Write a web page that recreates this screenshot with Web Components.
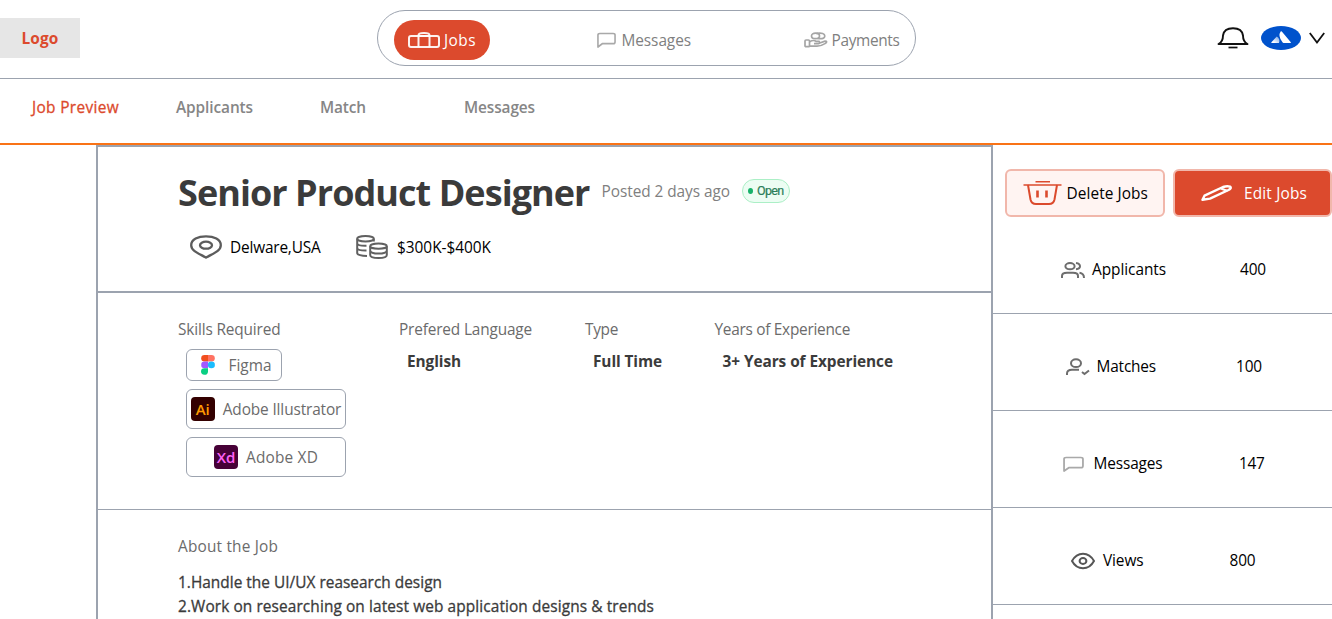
<!DOCTYPE html>
<html lang="en">
<head>
<meta charset="utf-8">
<title>Job Preview</title>
<style>
html,body{margin:0;height:100%;overflow:hidden;background:#fff;font:15.4px/24px "Open Sans","Noto Sans",sans-serif;color:#000}
</style>
</head>
<body>
<job-app></job-app>
<script>
const define = (name, html, setup) => {
  const t = document.createElement('template');
  t.innerHTML = html;
  customElements.define(name, class extends HTMLElement {
    connectedCallback() {
      if (this.shadowRoot) return;
      this.attachShadow({mode: 'open'}).append(t.content.cloneNode(true));
      if (setup) setup(this, this.shadowRoot);
    }
  });
};

/* A one-line label whose tracking is adjusted to fill the width in `w`. */
define('fit-text', `<style>:host{display:block;flex:none;white-space:nowrap}span{display:inline-block;transform:translateY(var(--dy,1px))}</style><span><slot></slot></span>`,
(host, root) => {
  const w = +host.getAttribute('w'), s = root.querySelector('span');
  host.style.width = w + 'px';
  s.style.letterSpacing = '0px';
  s.style.letterSpacing = ((w - s.getBoundingClientRect().width) / host.textContent.length).toFixed(3) + 'px';
});

const icons = {
  jobs: ['0 0 32 16', '<g stroke="#fff" stroke-opacity=".92" stroke-width="2"><rect x="1" y="4" width="30" height="11" rx="2"/><path d="M10.500 15V3.200Q10.500 1 16 1t5.500 2.200V15M10.500 4h11"/></g>'],
  msg: ['0 0 20 16', '<path d="M1 15V3Q1 1.500 3 1.500H17Q19 1.500 19 3V10Q19 11.700 17 11.700H5.500Z" stroke="#a9a9a9" stroke-width="1.700" stroke-linejoin="round"/>'],
  pay: ['0 0 24 16', '<g stroke="#a5a5a5" stroke-width="1.700"><ellipse cx="11.500" cy="3.900" rx="4" ry="2.700"/><path d="M12.500 1.400Q20.800 .300 20.800 3.900T13.500 6.400"/><rect x="1" y="8" width="4.500" height="6.700" rx="1"/><path d="M5.500 9.700Q10 7.500 12 9.400H15Q16.500 11.200 14.500 11.700H10M15 11.200L21 9.200Q24 9.200 21.500 11.400Q17 14.200 13 14.200H5.500"/></g>'],
  bell: ['0 0 32 24', '<path d="M1.500 18Q6 15.800 6 9.500Q7 2.200 16 2.200T26 9.500Q26 15.800 30.500 18Z" stroke="#111" stroke-width="1.900" stroke-linejoin="round"/><path d="M11.500 21.500H20.500" stroke="#111" stroke-width="1.700"/>'],
  avatar: ['0 0 40 24', '<defs><linearGradient id="g" x1="1" y1="0" x2="0" y2="1"><stop offset="0" stop-color="#6da0e8"/><stop offset=".8" stop-color="#fff"/></linearGradient></defs><ellipse cx="20" cy="12" rx="20" ry="12" fill="#0052cc"/><path d="M15.800 10.500Q19.500 13 18 17H10.600Q10 17 10.400 16.300Z" fill="url(#g)"/><path d="M19.600 5.500Q20.200 4.900 20.800 5.500L29.800 16.300Q30.200 17 29.500 17H22.500Q22 17 21.500 16.300Q16.500 10 19.600 5.500Z" fill="#fff"/>'],
  chevron: ['0 0 16 12', '<path d="M.8 1L8 10.500 15.200 1" stroke="#111" stroke-width="1.800"/>'],
  pin: ['0 0 32 24', '<g stroke="#5c5c5c" stroke-width="2.300"><path d="M16 22.600C9 18.500 1.200 16 1.200 10.200C1.200 4.500 8 1.300 16 1.300S30.800 4.500 30.800 10.200C30.800 16 23 18.500 16 22.600Z"/><ellipse cx="16" cy="10.200" rx="6" ry="3.500"/></g>'],
  coins: ['0 0 32 24', '<g stroke="#606060" stroke-width="2"><ellipse cx="9.500" cy="3.800" rx="8.300" ry="2.700"/><path d="M1.200 3.800V18Q1.200 20.700 11 20.900M17.800 3.800V6.500M1.200 8.500Q2 11 10.500 10.700M1.200 13.200Q2 15.700 10.500 15.500"/><ellipse cx="22.500" cy="11.200" rx="8.300" ry="2.600"/><path d="M14.200 11.200V20Q14.200 23 22.500 23T30.800 20V11.200M14.200 15.700Q15 18.600 22.500 18.600T30.800 15.700"/></g>'],
  trash: ['0 0 39 24', '<g stroke="#db4a2d"><path d="M.5 4H38.500M12.500 .8H27" stroke-width="1.500"/><path d="M5 4L7.500 18.500Q8.500 23 13 23H26Q30.500 23 31.500 18.500L34 4" stroke-width="2"/><path d="M14.500 9.500V16.500M23.500 9.500V16.500" stroke-width="2.600"/></g>'],
  pen: ['0 0 32 16', '<g stroke="#fff" stroke-width="2.400" stroke-linejoin="round"><path d="M1.500 14.800L3.500 10.700 22 2Q26 .8 29 1.600Q31 3 27.500 5L9 13.600Z"/><path d="M20 3.500L26.500 6"/></g>'],
  people: ['0 0 24 16', '<g stroke="#6d6d6d" stroke-width="2"><ellipse cx="9" cy="4.200" rx="4.600" ry="3.100"/><path d="M1 16V14Q1 10.800 6 10.800H12Q17 10.800 17 14V16M15 1.100Q19 1.700 19 4.300T15 7.300M18.500 10.800Q23 11.400 23 16"/></g>'],
  match: ['0 0 24 18', '<g stroke="#6d6d6d" stroke-width="2"><ellipse cx="10" cy="5.200" rx="5" ry="3.900"/><path d="M1 17V15.500Q1 11.700 6 11.700H13M16 14L18.500 16 23 12.500"/></g>'],
  eye: ['0 0 24 18', '<g stroke="#565656" stroke-width="2"><path d="M1 9Q5 1.700 12 1.700T23 9Q19 16.300 12 16.300T1 9Z"/><ellipse cx="12" cy="9" rx="3.400" ry="3"/></g>'],
  figma: ['0 0 14 20', '<path d="M3.500 0H7V6.600H3.500A3.300 3.300 0 0 1 3.500 0Z" fill="#f24e1e"/><path d="M7 0H10.500A3.300 3.300 0 0 1 10.500 6.600H7Z" fill="#ff7262"/><path d="M3.500 6.600H7V13.200H3.500A3.300 3.300 0 0 1 3.500 6.600Z" fill="#a259ff"/><ellipse cx="10.400" cy="9.900" rx="3.500" ry="3.300" fill="#1abcfe"/><path d="M3.500 13.200H7V16.700A3.500 3.300 0 1 1 3.500 13.200Z" fill="#0acf83"/>']
};
define('ui-icon', `<style>:host{display:block;flex:none}svg{display:block}</style><svg fill="none" preserveAspectRatio="none"></svg>`,
(host, root) => {
  const [box, body] = icons[host.getAttribute('name')], s = root.querySelector('svg'), d = box.split(' ');
  s.setAttribute('viewBox', box);
  s.setAttribute('width', host.getAttribute('w') || d[2]);
  s.setAttribute('height', host.getAttribute('h') || d[3]);
  s.innerHTML = body;
});

define('top-bar', `<style>
:host{display:flex;box-sizing:border-box;height:79px;border-bottom:1px solid #9ca3af;color:#808080}
.logo{width:80px;height:40px;margin-top:18px;background:#e6e6e6;color:#dc4a2d;font-weight:700;display:flex;align-items:center;justify-content:center}
nav{box-sizing:border-box;width:539px;height:56px;margin:10px 0 0 297px;border:1px solid #9ca3af;border-radius:28px;display:flex;align-items:flex-start;padding:9px 0 0 16px}
.on{box-sizing:border-box;width:96px;height:40px;border-radius:20px;background:#dc4a2d;color:#fff;display:flex;align-items:center;padding-left:14px;gap:4px}
.n{display:flex;align-items:center;height:24px;margin-top:8px}
.r{display:flex;align-items:center;height:24px;margin:26px 0 0 300.500px}
</style>
<div class="logo"><fit-text w="37">Logo</fit-text></div>
<nav><div class="on"><ui-icon name="jobs"></ui-icon><fit-text w="32">Jobs</fit-text></div>
<div class="n" style="margin-left:106.500px;gap:6px"><ui-icon name="msg" w="19" h="16"></ui-icon><fit-text w="69.500">Messages</fit-text></div>
<div class="n" style="margin-left:112.500px;gap:4px"><ui-icon name="pay"></ui-icon><fit-text w="68">Payments</fit-text></div></nav>
<div class="r"><ui-icon name="bell"></ui-icon><ui-icon name="avatar" style="margin-left:12px"></ui-icon><ui-icon name="chevron" style="margin-left:8px"></ui-icon></div>`);

define('tab-bar', `<style>
:host{display:grid;grid-template-columns:repeat(4,144px);box-sizing:border-box;height:66px;padding:16px 0 0 32px;border-bottom:2px solid #f97316;color:#868686;font-weight:600}
.on{color:#dc4a2d;font-weight:400;-webkit-text-stroke:.3px #dc4a2d}
</style><fit-text class="on" w="87">Job Preview</fit-text><fit-text w="77">Applicants</fit-text><fit-text w="46">Match</fit-text><fit-text w="71">Messages</fit-text>`);

define('status-badge', `<style>
:host{--dy:0px;display:flex;box-sizing:border-box;width:48px;height:24px;border:1px solid #abefc6;border-radius:12px;background:#ecfdf3;align-items:center;padding-left:5px;gap:4px;font:400 12.5px/22px Roboto,sans-serif;-webkit-text-stroke:.2px #2b7d59;color:#2b7d59}
i{width:5px;height:6px;border-radius:50%;background:#17b26a}
</style><i></i><fit-text w="26.500">Open</fit-text>`);

define('skill-chip', `<style>
:host{display:flex;box-sizing:border-box;width:160px;height:40px;border:1px solid #9ca3af;border-radius:6px;align-items:center;justify-content:center;gap:8px;margin-bottom:8px;color:#6b6b6b;font-weight:400}
:host([small]){width:96px;height:32px;gap:14px;padding-left:4px}
</style><slot></slot>`);

define('app-mark', `<style>
:host{display:block;flex:none;width:24px;height:24px;border-radius:4px;font:600 15px/24px "Open Sans",sans-serif;text-align:center}
:host([kind=ai]){background:#330000;color:#ff9a00}
:host([kind=xd]){background:#470137;color:#ff61f6}
</style><slot></slot>`);

define('job-field', `<style>
:host{display:block;color:#6b6b6b}
.v{padding:8px 0 0 8px}
::slotted(fit-text:not([slot])){color:#3b3b3b;font-weight:700}
</style><slot name="label"></slot><div class="v"><slot></slot></div>`);

define('job-card', `<style>
:host{display:block;box-sizing:border-box;width:897px;height:600px;border:2px solid #9ca3af;color:#3b3b3b}
.head{box-sizing:border-box;height:146px;border-bottom:2px solid #9ca3af;padding:24px 0 0 80px}
.t{display:flex;height:44px}
h1{--dy:0px;margin:0;font-size:36px;line-height:44px;font-weight:700}
.m{display:flex;align-items:center;margin:20px 0 0 12px;color:#000}
.f{box-sizing:border-box;height:217px;border-bottom:1px solid #9ca3af;display:grid;grid-template-columns:221px 186px 129.500px 1fr;padding:24px 0 0 80px}
.a{padding:24px 0 0 80px}
.l{margin-top:12px;-webkit-text-stroke:.3px #3b3b3b}
.g{color:#6b6b6b}
</style>
<div class="head"><div class="t"><h1><fit-text w="411.500">Senior Product Designer</fit-text></h1><fit-text w="128.500" style="margin:8px 0 0 12px;color:#808080">Posted 2 days ago</fit-text><status-badge style="margin:8px 0 0 12px"></status-badge></div>
<div class="m"><ui-icon name="pin"></ui-icon><fit-text w="90.500" style="margin-left:8px">Delware,USA</fit-text><ui-icon name="coins" style="margin-left:35.500px"></ui-icon><fit-text w="94" style="margin-left:9px">$300K-$400K</fit-text></div></div>
<div class="f">
<job-field><fit-text slot="label" w="102.500">Skills Required</fit-text>
<skill-chip small><ui-icon name="figma"></ui-icon><fit-text w="43">Figma</fit-text></skill-chip>
<skill-chip><app-mark kind="ai">Ai</app-mark><fit-text w="118.500">Adobe Illustrator</fit-text></skill-chip>
<skill-chip><app-mark kind="xd">Xd</app-mark><fit-text w="72">Adobe XD</fit-text></skill-chip></job-field>
<job-field><fit-text slot="label" w="133">Prefered Language</fit-text><fit-text w="54">English</fit-text></job-field>
<job-field><fit-text slot="label" w="33">Type</fit-text><fit-text w="69">Full Time</fit-text></job-field>
<job-field><fit-text slot="label" w="135.500">Years of Experience</fit-text><fit-text w="170.500">3+ Years of Experience</fit-text></job-field>
</div>
<div class="a"><fit-text class="g" w="100">About the Job</fit-text>
<div class="l"><fit-text w="264">1.Handle the UI/UX reasearch design</fit-text><fit-text w="476">2.Work on researching on latest web application designs &amp; trends</fit-text></div></div>`);

define('action-button', `<style>
:host{display:flex;flex:none;box-sizing:border-box;width:160px;height:48px;border:2px solid #f1b7ab;border-radius:6px;background:#fff4f2;align-items:center;padding-left:16px;gap:4.500px}
:host([primary]){width:159px;background:#dc4a2d;color:#fff;padding-left:26px;gap:11px}
</style><slot></slot>`);

define('stat-row', `<style>
:host{--dy:0px;display:flex;box-sizing:border-box;height:97px;border-bottom:1px solid #9ca3af;align-items:center;padding-top:9px}
</style><slot></slot>`);

define('side-panel', `<style>
:host{display:block;width:339px}
.b{display:flex;gap:8px;padding:24px 0 0 12px}
</style>
<div class="b"><action-button><ui-icon name="trash"></ui-icon><fit-text w="81.500">Delete Jobs</fit-text></action-button><action-button primary><ui-icon name="pen"></ui-icon><fit-text w="63">Edit Jobs</fit-text></action-button></div>
<stat-row><ui-icon name="people" style="margin-left:67.500px"></ui-icon><fit-text w="74" style="margin-left:7.500px">Applicants</fit-text><fit-text w="26" style="margin-left:74px">400</fit-text></stat-row>
<stat-row><ui-icon name="match" style="margin-left:72.500px"></ui-icon><fit-text w="59.500" style="margin-left:7px">Matches</fit-text><fit-text w="26" style="margin-left:80px">100</fit-text></stat-row>
<stat-row><ui-icon name="msg" w="21" h="16" style="margin-left:69.500px"></ui-icon><fit-text w="69" style="margin-left:10px">Messages</fit-text><fit-text w="25.500" style="margin-left:76.500px">147</fit-text></stat-row>
<stat-row><ui-icon name="eye" style="margin-left:77.500px"></ui-icon><fit-text w="40.500" style="margin-left:8.500px">Views</fit-text><fit-text w="26" style="margin-left:86px">800</fit-text></stat-row>`);

define('job-app', `<style>
:host{display:block;height:619px;overflow:hidden}
main{display:flex;padding-left:96px}
</style><top-bar></top-bar><tab-bar></tab-bar><main><job-card></job-card><side-panel></side-panel></main>`);
</script>
</body>
</html>
